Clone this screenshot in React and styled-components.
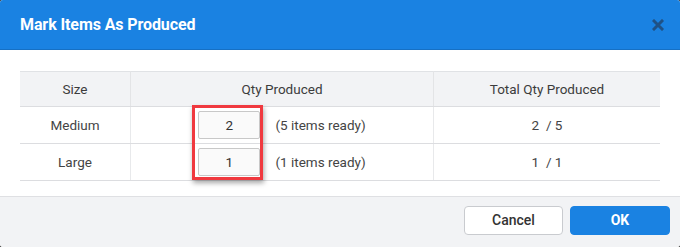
import React from 'react'
import styled, { createGlobalStyle } from 'styled-components'

const GlobalStyle = createGlobalStyle`
  html, body {
    margin: 0;
    padding: 0;
    background: #3a3a3a;
  }
  body {
    font-family: Roboto, "Liberation Sans", Arial, sans-serif;
  }
`;

const Dialog = styled.div`
  width: 680px;
  height: 247px;
  background: #fff;
  border-radius: 3px;
  overflow: hidden;
  display: flex;
  flex-direction: column;
`;

const Header = styled.div`
  height: 50px;
  flex: none;
  background: #1a82e2;
  border-bottom: 1px solid #1670c4;
  box-sizing: border-box;
  display: flex;
  align-items: center;
  justify-content: space-between;
  padding: 0 16px 0 20px;
`;

const Title = styled.h2`
  margin: 0;
  font-size: 16px;
  font-weight: 700;
  color: #fff;
  letter-spacing: -0.1px;
`;

const Close = styled.button`
  border: 0;
  background: none;
  padding: 0;
  width: 12px;
  height: 12px;
  display: flex;
  cursor: pointer;
`;

const Body = styled.div`
  flex: 1;
  padding: 21px 20px 0;
`;

const TableWrap = styled.div`
  position: relative;
`;

const Table = styled.table`
  width: 100%;
  border-collapse: collapse;
  font-size: 13.5px;
  color: #444;
  border-top: 1px solid #e0e2e5;
`;

const Th = styled.th`
  height: 34px;
  background: #f2f3f5;
  font-weight: 400;
  color: #3c3c3c;
  width: ${p => p.$w};
  padding: 0;
  border-bottom: 1px solid #dcdde0;
  & + & {
    border-left: 1px solid #e3e4e6;
  }
`;

const Td = styled.td`
  height: 36px;
  padding: 0;
  text-align: center;
  border-bottom: 1px solid #dcdde0;
  & + & {
    border-left: 1px solid #e8e9eb;
  }
`;

const QtyCell = styled.div`
  display: flex;
  align-items: center;
  justify-content: center;
  gap: 15px;
`;

const QtyInput = styled.input`
  width: 62px;
  height: 28px;
  box-sizing: border-box;
  border: 1px solid #c8c8c8;
  border-radius: 2px;
  background: #fafafa;
  text-align: center;
  font-family: inherit;
  font-size: 13.5px;
  color: #333;
  padding: 0;
`;

const Highlight = styled.div`
  position: absolute;
  left: 172px;
  top: 34px;
  width: 71px;
  height: 75px;
  box-sizing: border-box;
  border: 3px solid #f0393f;
  box-shadow: 1px 3px 5px rgba(0, 0, 0, 0.35);
  pointer-events: none;
`;

const Footer = styled.div`
  height: 46px;
  flex: none;
  background: #f2f3f5;
  border-top: 1px solid #dfe0e3;
  display: flex;
  justify-content: flex-end;
  align-items: center;
  gap: 7px;
  padding: 0 10px 4px;
`;

const Button = styled.button`
  width: ${p => (p.$primary ? '100px' : '99px')};
  height: 29px;
  border-radius: 4px;
  font-family: inherit;
  font-size: 14px;
  font-weight: ${p => (p.$primary ? 700 : 500)};
  cursor: pointer;
  border: 1px solid ${p => (p.$primary ? '#1a82e2' : '#c9cbcf')};
  background: ${p => (p.$primary ? '#1a82e2' : '#fff')};
  color: ${p => (p.$primary ? '#fff' : '#333')};
`;

const rows = [
  { size: 'Medium', qty: 2, ready: 5 },
  { size: 'Large', qty: 1, ready: 1 },
];

export default function App() {
  return (
    <>
      <GlobalStyle />
      <Dialog>
        <Header>
          <Title>Mark Items As Produced</Title>
          <Close aria-label="close">
            <svg width="12" height="12" viewBox="0 0 12 12">
              <path d="M2 2 L10 10 M10 2 L2 10" stroke="#1f5185" strokeWidth="3" strokeLinecap="square" />
            </svg>
          </Close>
        </Header>
        <Body>
          <TableWrap>
            <Table>
              <thead>
                <tr>
                  <Th $w="110px">Size</Th>
                  <Th $w="302px">Qty Produced</Th>
                  <Th>Total Qty Produced</Th>
                </tr>
              </thead>
              <tbody>
                {rows.map(r => (
                  <tr key={r.size}>
                    <Td>{r.size}</Td>
                    <Td>
                      <QtyCell>
                        <QtyInput defaultValue={r.qty} />
                        <span>({r.ready} items ready)</span>
                      </QtyCell>
                    </Td>
                    <Td>{r.qty}&nbsp; / {r.ready}</Td>
                  </tr>
                ))}
              </tbody>
            </Table>
            <Highlight />
          </TableWrap>
        </Body>
        <Footer>
          <Button>Cancel</Button>
          <Button $primary>OK</Button>
        </Footer>
      </Dialog>
    </>
  )
}
